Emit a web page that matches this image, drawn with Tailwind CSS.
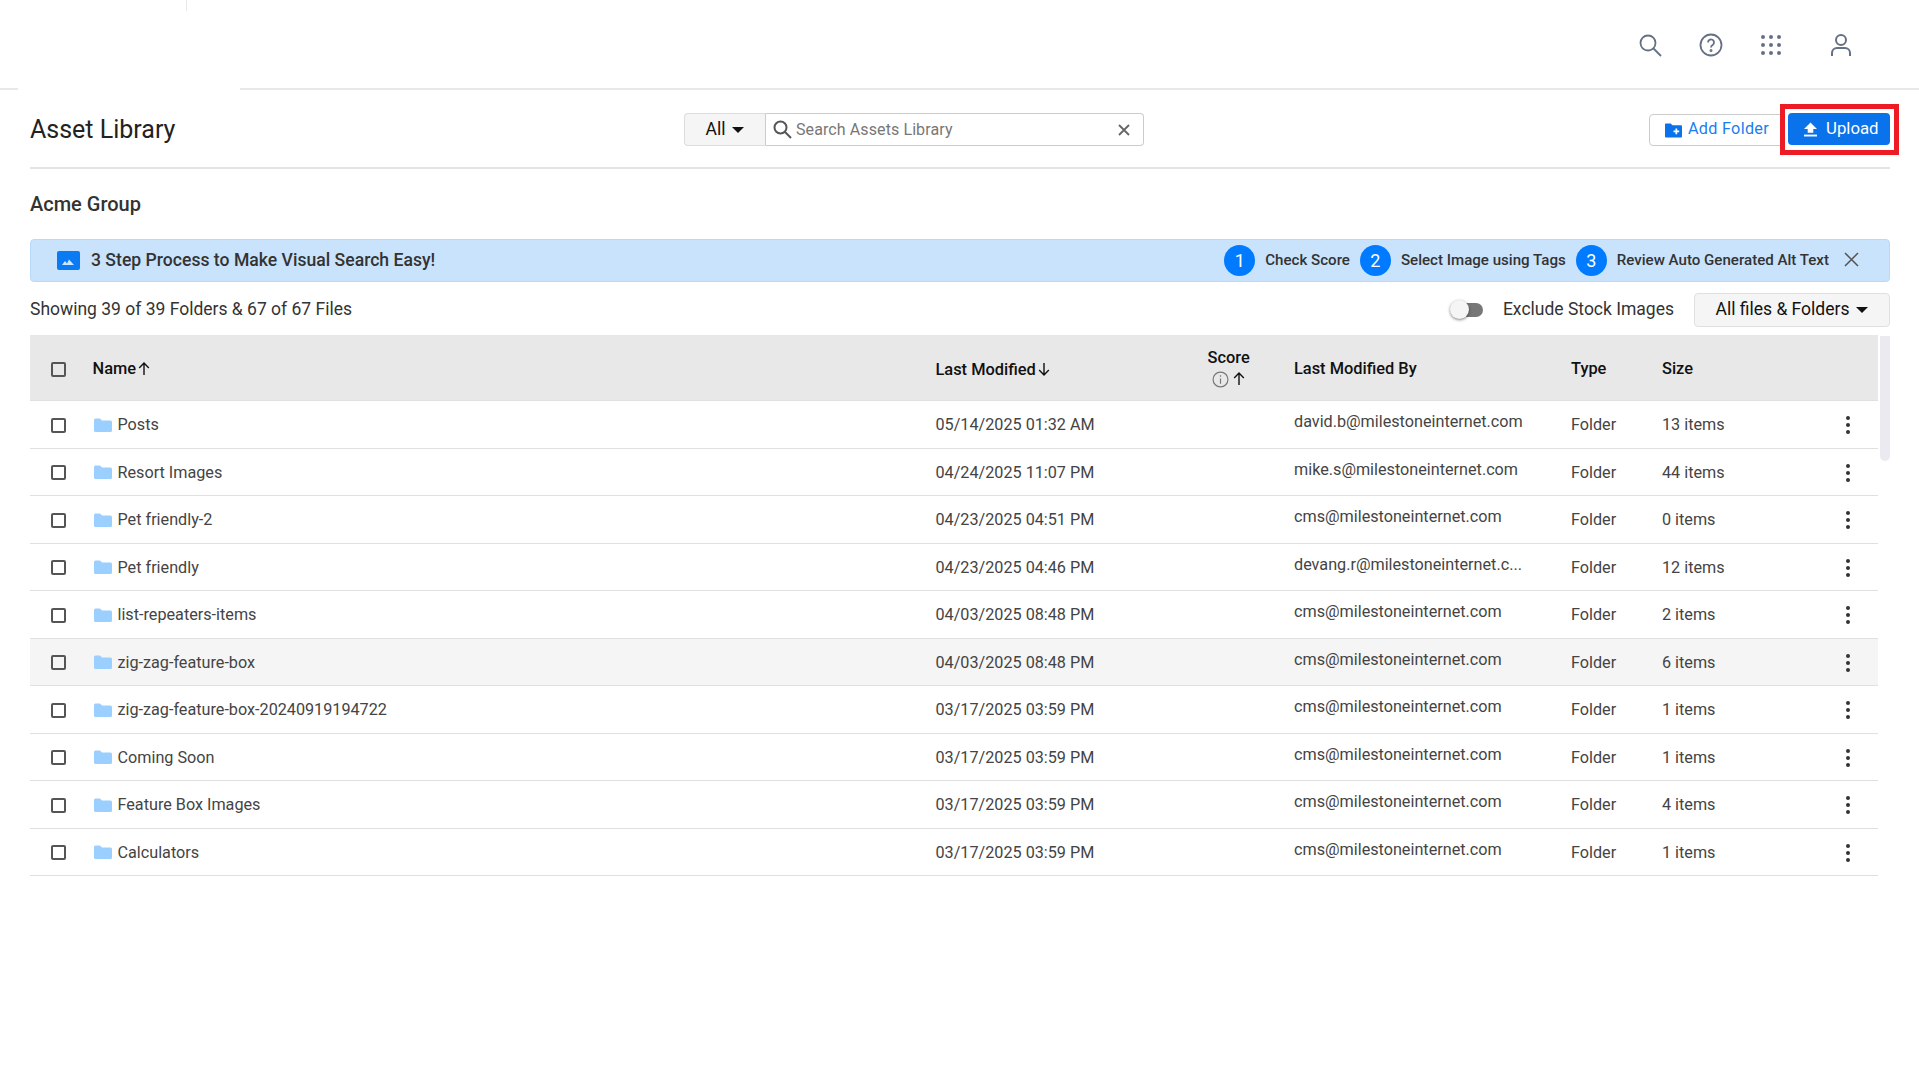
<!DOCTYPE html>
<html><head><meta charset="utf-8"><title>Asset Library</title>
<script src="https://cdn.jsdelivr.net/npm/@tailwindcss/browser@4"></script></head>
<body class="bg-white font-['Roboto',sans-serif] text-[#333] overflow-hidden">
<div class="w-[1919px] h-[1079px] relative">
<header class="h-[90px] flex items-center justify-end pr-[66px] gap-[36px] relative">
  <div class="absolute left-0 bottom-0 w-[18px] h-[2px] bg-[#e8e8e8]"></div>
  <div class="absolute left-[240px] right-0 bottom-0 h-[2px] bg-[#e8e8e8]"></div>
  <div class="absolute left-[186px] top-0 w-[1px] h-[11px] bg-[#e8e8e8]"></div>
  <svg class="w-[24px] h-[24px] mr-[1px] -mt-[1px]" viewBox="0 0 24 24" fill="none" stroke="#667085" stroke-width="1.8"><circle cx="10" cy="10" r="7.5"/><path d="M15.5 15.5 23 23"/></svg>
  <svg class="w-[24px] h-[24px] -mt-[1px]" viewBox="0 0 24 24" fill="none" stroke="#667085" stroke-width="1.8"><circle cx="12" cy="12" r="10.5"/><path d="M9 9.5a3 3 0 1 1 4.6 2.5c-1 .7-1.600 1.200-1.600 2.500"/><circle cx="12" cy="17.500" r=".6"/></svg>
  <svg class="w-[24px] h-[24px] -mt-[1px]" viewBox="0 0 24 24" fill="#667085"><circle cx="4" cy="4" r="2"/><circle cx="12" cy="4" r="2"/><circle cx="20" cy="4" r="2"/><circle cx="4" cy="12" r="2"/><circle cx="12" cy="12" r="2"/><circle cx="20" cy="12" r="2"/><circle cx="4" cy="20" r="2"/><circle cx="12" cy="20" r="2"/><circle cx="20" cy="20" r="2"/></svg>
  <svg class="w-[24px] h-[24px] ml-[10px] -mt-[1px]" viewBox="0 0 24 24" fill="none" stroke="#667085" stroke-width="2"><circle cx="12" cy="7" r="5"/><path d="M3 23v-3a5 5 0 0 1 5-5h8a5 5 0 0 1 5 5v3"/></svg>
</header>
<div class="ml-[30px] mr-[29px] h-[79px] border-b-2 border-[#e4e4e4] flex items-center relative">
  <h1 class="text-[25px] text-[#222] leading-none pt-[1px]">Asset Library</h1>
  <div class="absolute left-[654px] top-[23px] flex h-[33px] w-[460px] text-[16px]">
    <div class="w-[82px] bg-[#f5f5f5] border border-[#ddd] border-r-[#ccc] rounded-l-[4px] flex items-center justify-center gap-[7px] text-[#111] text-[17.5px]">All <span class="w-0 h-0 border-x-[6px] border-x-transparent border-t-[6px] border-t-[#111]"></span></div>
    <div class="flex-1 border border-[#ccc] border-l-0 rounded-r-[4px] flex items-center pl-[7px] pr-[13px] gap-[4px] text-[#777] tracking-[0.1px]">
      <svg class="w-[19px] h-[19px]" viewBox="0 0 19 19" fill="none" stroke="#555" stroke-width="2"><circle cx="7.5" cy="7.5" r="6"/><path d="M12 12l6 6"/></svg>
      <span class="flex-1">Search Assets Library</span>
      <svg class="w-[12px] h-[12px]" viewBox="0 0 12 12" fill="none" stroke="#666" stroke-width="1.8"><path d="M1 1l10 10M11 1 1 11"/></svg>
    </div>
  </div>
  <div class="absolute right-[-9px] top-[14px] flex items-center">
    <div class="w-[140px] h-[32px] border border-[#ccc] rounded-[4px] flex items-center pl-[15px] gap-[6px] text-[#1a7ef2] text-[16.2px] tracking-[0.3px] mr-[-9px]">
      <svg class="w-[17px] h-[16px]" viewBox="0 0 18 16"><path d="M0 2a1 1 0 0 1 1-1h5l2 2h9a1 1 0 0 1 1 1v11a1 1 0 0 1-1 1H1a1 1 0 0 1-1-1z" fill="#0a73eb"/><path d="M9 9.5h6M12 6.5v6" stroke="#fff" stroke-width="1.8"/></svg>
      Add Folder
    </div>
    <div class="relative z-10 border-[5px] border-[#ed1c24] pt-[4px] pb-[5px] pl-[3px] pr-[4px] bg-white">
      <div class="w-[102px] h-[32px] bg-[#0a73eb] rounded-[4px] flex items-center pl-[16px] gap-[9px] text-white text-[16.8px]">
        <svg class="w-[13px] h-[15px]" viewBox="0 0 14 15" fill="#fff"><path d="M7 0 14 7H10v4H4V7H0z"/><rect y="13" width="14" height="2"/></svg>
        Upload
      </div>
    </div>
  </div>
</div>
<div class="ml-[30px] mt-[17px] text-[20px] font-medium text-[#333] leading-[36px]">Acme Group</div>
<div class="ml-[30px] mr-[29px] mt-[17px] h-[43px] bg-[#c9e3fd] border border-[#b8d9fb] rounded-[4px] flex items-center pl-[26px] pr-[30px] text-[#333]">
  <svg class="w-[23px] h-[19px] mr-[11px]" viewBox="0 0 23 19"><rect width="23" height="19" rx="2" fill="#0a7bf2"/><path d="M5 14l3-4 2 2.500 2-4 5 5.500z" fill="#cfe6ff"/></svg>
  <span class="text-[17.6px] font-medium flex-1">3 Step Process to Make Visual Search Easy!</span>
  <span class="w-[31px] h-[31px] rounded-full bg-[#007bff] text-white flex items-center justify-center text-[18px]">1</span>
  <span class="text-[15.1px] font-medium ml-[10px] mr-[10px]">Check Score</span>
  <span class="w-[31px] h-[31px] rounded-full bg-[#007bff] text-white flex items-center justify-center text-[18px]">2</span>
  <span class="text-[15.1px] font-medium ml-[10px] mr-[10px]">Select Image using Tags</span>
  <span class="w-[31px] h-[31px] rounded-full bg-[#007bff] text-white flex items-center justify-center text-[18px]">3</span>
  <span class="text-[15.1px] font-medium ml-[10px] mr-[15px]">Review Auto Generated Alt Text</span>
  <svg class="w-[15px] h-[15px] -mt-[3px]" viewBox="0 0 15 15" fill="none" stroke="#555" stroke-width="1.5"><path d="M1 1l13 13M14 1 1 14"/></svg>
</div>
<div class="ml-[30px] mr-[29px] h-[53px] pt-[2px] flex items-center text-[17.5px] text-[#333]">
  <span class="flex-1">Showing 39 of 39 Folders &amp; 67 of 67 Files</span>
  <span class="relative w-[32px] h-[14px] rounded-full bg-[#777] mr-[20px]"><span class="absolute left-[-1px] top-[-3px] w-[19px] h-[19px] rounded-full bg-[#f5f5f5] shadow-[0_1px_3px_rgba(0,0,0,0.5)]"></span></span>
  <span class="mr-[20px]">Exclude Stock Images</span>
  <span class="w-[196px] h-[34px] bg-[#f5f5f5] border border-[#e0e0e0] rounded-[4px] flex items-center justify-center gap-[7px] text-[#111]">All files &amp; Folders <span class="w-0 h-0 border-x-[6px] border-x-transparent border-t-[6px] border-t-[#111]"></span></span>
</div>
<div class="absolute left-[1880px] top-[336px] w-[10px] h-[125px] bg-[#eaeaf0] rounded-b-[5px]"></div>

<div class="ml-[30px] w-[1848px] text-[16.2px] text-[#444] [&>div]:grid [&>div]:grid-cols-[61.5px_844px_272px_86.5px_277px_91px_184px_32px] [&>div]:items-center [&>div]:border-b [&>div]:border-[#e0e0e0] [&>div]:h-[47.5px] [&>div]:pt-[2px]">
  <div class="!h-[66px] !pt-[4px] bg-[#e8e8e8] text-[#111] font-medium text-[16.4px]">
    <span class="pl-[21px]"><span class="block w-[15px] h-[15px] border-2 border-[#555] rounded-[2px]"></span></span>
    <span class="flex items-center gap-[1px] ml-[1px]">Name <svg class="w-[14px] h-[14px] -mt-[1px]" viewBox="0 0 13 13" fill="none" stroke="#111" stroke-width="1.3"><path d="M6.5 12V1M2 5.500 6.500 1 11 5.500"/></svg></span>
    <span class="flex items-center gap-[1px] pt-[1px]">Last Modified <svg class="w-[14px] h-[14px] -mt-[2px]" viewBox="0 0 13 13" fill="none" stroke="#111" stroke-width="1.3"><path d="M6.5 1v11M2 7.500 6.500 12 11 7.500"/></svg></span>
    <span class="leading-[26px] -mt-[6px]">Score<span class="flex items-center gap-[3px] pl-[4px]"><svg class="w-[17px] h-[17px]" viewBox="0 0 16 16" fill="none" stroke="#777" stroke-width="1.1"><circle cx="8" cy="8" r="7"/><path d="M8 7v5M8 4v1.500"/></svg><svg class="w-[14px] h-[14px] -mt-[2px]" viewBox="0 0 13 13" fill="none" stroke="#111" stroke-width="1.3"><path d="M6.5 12V1M2 5.500 6.500 1 11 5.500"/></svg></span></span>
    <span>Last Modified By</span><span>Type</span><span>Size</span><span></span>
  </div>
  <div>
    <span class="pl-[21px]"><span class="block w-[15px] h-[15px] border-2 border-[#555] rounded-[2px]"></span></span>
    <span class="flex items-center gap-[6px] ml-[2px]"><svg class="w-[18px] h-[15px]" viewBox="0 0 18 15"><path d="M0 2a1.500 1.500 0 0 1 1.500-1.500h4.500l2 2h8.500a1.500 1.500 0 0 1 1.500 1.500v8.500a1.500 1.500 0 0 1-1.500 1.500h-15a1.500 1.500 0 0 1-1.500-1.500z" fill="#9bcfff"/></svg>Posts</span>
    <span>05/14/2025 01:32 AM</span><span></span><span class="-mt-[6px]">david.b@milestoneinternet.com</span><span>Folder</span><span>13 items</span>
    <span class="flex flex-col items-center gap-[3px] w-[4px]"><i class="w-[4px] h-[4px] rounded-full bg-[#333]"></i><i class="w-[4px] h-[4px] rounded-full bg-[#333]"></i><i class="w-[4px] h-[4px] rounded-full bg-[#333]"></i></span>
  </div>
  <div>
    <span class="pl-[21px]"><span class="block w-[15px] h-[15px] border-2 border-[#555] rounded-[2px]"></span></span>
    <span class="flex items-center gap-[6px] ml-[2px]"><svg class="w-[18px] h-[15px]" viewBox="0 0 18 15"><path d="M0 2a1.500 1.500 0 0 1 1.500-1.500h4.500l2 2h8.500a1.500 1.500 0 0 1 1.500 1.500v8.500a1.500 1.500 0 0 1-1.500 1.500h-15a1.500 1.500 0 0 1-1.500-1.500z" fill="#9bcfff"/></svg>Resort Images</span>
    <span>04/24/2025 11:07 PM</span><span></span><span class="-mt-[6px]">mike.s@milestoneinternet.com</span><span>Folder</span><span>44 items</span>
    <span class="flex flex-col items-center gap-[3px] w-[4px]"><i class="w-[4px] h-[4px] rounded-full bg-[#333]"></i><i class="w-[4px] h-[4px] rounded-full bg-[#333]"></i><i class="w-[4px] h-[4px] rounded-full bg-[#333]"></i></span>
  </div>
  <div>
    <span class="pl-[21px]"><span class="block w-[15px] h-[15px] border-2 border-[#555] rounded-[2px]"></span></span>
    <span class="flex items-center gap-[6px] ml-[2px]"><svg class="w-[18px] h-[15px]" viewBox="0 0 18 15"><path d="M0 2a1.500 1.500 0 0 1 1.500-1.500h4.500l2 2h8.500a1.500 1.500 0 0 1 1.500 1.500v8.500a1.500 1.500 0 0 1-1.500 1.500h-15a1.500 1.500 0 0 1-1.500-1.500z" fill="#9bcfff"/></svg>Pet friendly-2</span>
    <span>04/23/2025 04:51 PM</span><span></span><span class="-mt-[6px]">cms@milestoneinternet.com</span><span>Folder</span><span>0 items</span>
    <span class="flex flex-col items-center gap-[3px] w-[4px]"><i class="w-[4px] h-[4px] rounded-full bg-[#333]"></i><i class="w-[4px] h-[4px] rounded-full bg-[#333]"></i><i class="w-[4px] h-[4px] rounded-full bg-[#333]"></i></span>
  </div>
  <div>
    <span class="pl-[21px]"><span class="block w-[15px] h-[15px] border-2 border-[#555] rounded-[2px]"></span></span>
    <span class="flex items-center gap-[6px] ml-[2px]"><svg class="w-[18px] h-[15px]" viewBox="0 0 18 15"><path d="M0 2a1.500 1.500 0 0 1 1.500-1.500h4.500l2 2h8.500a1.500 1.500 0 0 1 1.500 1.500v8.500a1.500 1.500 0 0 1-1.500 1.500h-15a1.500 1.500 0 0 1-1.500-1.500z" fill="#9bcfff"/></svg>Pet friendly</span>
    <span>04/23/2025 04:46 PM</span><span></span><span class="-mt-[6px]">devang.r@milestoneinternet.c...</span><span>Folder</span><span>12 items</span>
    <span class="flex flex-col items-center gap-[3px] w-[4px]"><i class="w-[4px] h-[4px] rounded-full bg-[#333]"></i><i class="w-[4px] h-[4px] rounded-full bg-[#333]"></i><i class="w-[4px] h-[4px] rounded-full bg-[#333]"></i></span>
  </div>
  <div>
    <span class="pl-[21px]"><span class="block w-[15px] h-[15px] border-2 border-[#555] rounded-[2px]"></span></span>
    <span class="flex items-center gap-[6px] ml-[2px]"><svg class="w-[18px] h-[15px]" viewBox="0 0 18 15"><path d="M0 2a1.500 1.500 0 0 1 1.500-1.500h4.500l2 2h8.500a1.500 1.500 0 0 1 1.500 1.500v8.500a1.500 1.500 0 0 1-1.500 1.500h-15a1.500 1.500 0 0 1-1.500-1.500z" fill="#9bcfff"/></svg>list-repeaters-items</span>
    <span>04/03/2025 08:48 PM</span><span></span><span class="-mt-[6px]">cms@milestoneinternet.com</span><span>Folder</span><span>2 items</span>
    <span class="flex flex-col items-center gap-[3px] w-[4px]"><i class="w-[4px] h-[4px] rounded-full bg-[#333]"></i><i class="w-[4px] h-[4px] rounded-full bg-[#333]"></i><i class="w-[4px] h-[4px] rounded-full bg-[#333]"></i></span>
  </div>
  <div class="bg-[#f5f5f5]">
    <span class="pl-[21px]"><span class="block w-[15px] h-[15px] border-2 border-[#555] rounded-[2px]"></span></span>
    <span class="flex items-center gap-[6px] ml-[2px]"><svg class="w-[18px] h-[15px]" viewBox="0 0 18 15"><path d="M0 2a1.500 1.500 0 0 1 1.500-1.500h4.500l2 2h8.500a1.500 1.500 0 0 1 1.500 1.500v8.500a1.500 1.500 0 0 1-1.500 1.500h-15a1.500 1.500 0 0 1-1.500-1.500z" fill="#9bcfff"/></svg>zig-zag-feature-box</span>
    <span>04/03/2025 08:48 PM</span><span></span><span class="-mt-[6px]">cms@milestoneinternet.com</span><span>Folder</span><span>6 items</span>
    <span class="flex flex-col items-center gap-[3px] w-[4px]"><i class="w-[4px] h-[4px] rounded-full bg-[#333]"></i><i class="w-[4px] h-[4px] rounded-full bg-[#333]"></i><i class="w-[4px] h-[4px] rounded-full bg-[#333]"></i></span>
  </div>
  <div>
    <span class="pl-[21px]"><span class="block w-[15px] h-[15px] border-2 border-[#555] rounded-[2px]"></span></span>
    <span class="flex items-center gap-[6px] ml-[2px]"><svg class="w-[18px] h-[15px]" viewBox="0 0 18 15"><path d="M0 2a1.500 1.500 0 0 1 1.500-1.500h4.500l2 2h8.500a1.500 1.500 0 0 1 1.500 1.500v8.500a1.500 1.500 0 0 1-1.500 1.500h-15a1.500 1.500 0 0 1-1.500-1.500z" fill="#9bcfff"/></svg>zig-zag-feature-box-20240919194722</span>
    <span>03/17/2025 03:59 PM</span><span></span><span class="-mt-[6px]">cms@milestoneinternet.com</span><span>Folder</span><span>1 items</span>
    <span class="flex flex-col items-center gap-[3px] w-[4px]"><i class="w-[4px] h-[4px] rounded-full bg-[#333]"></i><i class="w-[4px] h-[4px] rounded-full bg-[#333]"></i><i class="w-[4px] h-[4px] rounded-full bg-[#333]"></i></span>
  </div>
  <div>
    <span class="pl-[21px]"><span class="block w-[15px] h-[15px] border-2 border-[#555] rounded-[2px]"></span></span>
    <span class="flex items-center gap-[6px] ml-[2px]"><svg class="w-[18px] h-[15px]" viewBox="0 0 18 15"><path d="M0 2a1.500 1.500 0 0 1 1.500-1.500h4.500l2 2h8.500a1.500 1.500 0 0 1 1.500 1.500v8.500a1.500 1.500 0 0 1-1.500 1.500h-15a1.500 1.500 0 0 1-1.500-1.500z" fill="#9bcfff"/></svg>Coming Soon</span>
    <span>03/17/2025 03:59 PM</span><span></span><span class="-mt-[6px]">cms@milestoneinternet.com</span><span>Folder</span><span>1 items</span>
    <span class="flex flex-col items-center gap-[3px] w-[4px]"><i class="w-[4px] h-[4px] rounded-full bg-[#333]"></i><i class="w-[4px] h-[4px] rounded-full bg-[#333]"></i><i class="w-[4px] h-[4px] rounded-full bg-[#333]"></i></span>
  </div>
  <div>
    <span class="pl-[21px]"><span class="block w-[15px] h-[15px] border-2 border-[#555] rounded-[2px]"></span></span>
    <span class="flex items-center gap-[6px] ml-[2px]"><svg class="w-[18px] h-[15px]" viewBox="0 0 18 15"><path d="M0 2a1.500 1.500 0 0 1 1.500-1.500h4.500l2 2h8.500a1.500 1.500 0 0 1 1.500 1.500v8.500a1.500 1.500 0 0 1-1.500 1.500h-15a1.500 1.500 0 0 1-1.500-1.500z" fill="#9bcfff"/></svg>Feature Box Images</span>
    <span>03/17/2025 03:59 PM</span><span></span><span class="-mt-[6px]">cms@milestoneinternet.com</span><span>Folder</span><span>4 items</span>
    <span class="flex flex-col items-center gap-[3px] w-[4px]"><i class="w-[4px] h-[4px] rounded-full bg-[#333]"></i><i class="w-[4px] h-[4px] rounded-full bg-[#333]"></i><i class="w-[4px] h-[4px] rounded-full bg-[#333]"></i></span>
  </div>
  <div>
    <span class="pl-[21px]"><span class="block w-[15px] h-[15px] border-2 border-[#555] rounded-[2px]"></span></span>
    <span class="flex items-center gap-[6px] ml-[2px]"><svg class="w-[18px] h-[15px]" viewBox="0 0 18 15"><path d="M0 2a1.500 1.500 0 0 1 1.500-1.500h4.500l2 2h8.500a1.500 1.500 0 0 1 1.500 1.500v8.500a1.500 1.500 0 0 1-1.500 1.500h-15a1.500 1.500 0 0 1-1.500-1.500z" fill="#9bcfff"/></svg>Calculators</span>
    <span>03/17/2025 03:59 PM</span><span></span><span class="-mt-[6px]">cms@milestoneinternet.com</span><span>Folder</span><span>1 items</span>
    <span class="flex flex-col items-center gap-[3px] w-[4px]"><i class="w-[4px] h-[4px] rounded-full bg-[#333]"></i><i class="w-[4px] h-[4px] rounded-full bg-[#333]"></i><i class="w-[4px] h-[4px] rounded-full bg-[#333]"></i></span>
  </div>
</div>
</div>
</body></html>
